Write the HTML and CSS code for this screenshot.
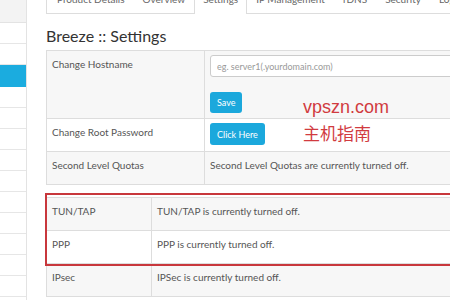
FILE: index.html
```html
<!doctype html>
<html lang="en">

<head>
    <meta charset="utf-8">
    <title>Breeze :: Settings</title>
    <link rel="stylesheet" href="styles.css">
</head>

<body>
<div class="page">
    <div class="sidebar">
        <div class="side-top"></div>
        <ul class="side-menu">
            <li></li>
            <li></li>
            <li class="active"></li>
            <li></li>
            <li></li>
            <li></li>
            <li></li>
            <li></li>
            <li></li>
            <li></li>
            <li></li>
            <li></li>
            <li></li>
        </ul>
    </div>

    <div class="main">
        <ul class="tabs">
            <li class="first">Product Details</li>
            <li>Overview</li>
            <li class="active">Settings</li>
            <li>IP Management</li>
            <li>rDNS</li>
            <li>Security</li>
            <li>Log</li>
        </ul>

        <h2 class="title">Breeze :: Settings</h2>

        <table class="settings">
            <colgroup>
                <col class="label-col">
                <col>
            </colgroup>
            <tr>
                <td class="label">Change Hostname</td>
                <td class="field">
                    <input class="input" type="text" placeholder="eg. server1(.yourdomain.com)">
                    <button class="btn save">Save</button>
                </td>
            </tr>
            <tr>
                <td class="label">Change Root Password</td>
                <td class="field">
                    <button class="btn">Click Here</button>
                </td>
            </tr>
            <tr>
                <td class="label">Second Level Quotas</td>
                <td>Second Level Quotas are currently turned off.</td>
            </tr>
        </table>

        <div class="group">
            <table class="settings modules">
                <colgroup>
                    <col class="short-col">
                    <col>
                </colgroup>
                <tr>
                    <td>TUN/TAP</td>
                    <td>TUN/TAP is currently turned off.</td>
                </tr>
                <tr>
                    <td>PPP</td>
                    <td>PPP is currently turned off.</td>
                </tr>
                <tr>
                    <td>IPsec</td>
                    <td>IPSec is currently turned off.</td>
                </tr>
            </table>
            <div class="mark"></div>
        </div>
    </div>

    <div class="watermark">
        <div class="wm-en">vpszn.com</div>
        <div class="wm-cn">主机指南</div>
    </div>
</div>
</body>

</html>
```

FILE: styles.css
```css
body {
    margin: 0;
    font-family: Lato, "Open Sans", sans-serif;
    font-size: 10px;
    color: #555555;
    background: #ffffff;
    overflow: hidden;
}

.page {
    position: relative;
    display: flex;
    height: 300px;
    overflow: hidden;
}

/* left menu */
.sidebar {
    width: 26px;
    flex-shrink: 0;
    margin-right: 19px;
    border-right: 1px solid #e3e3e3;
}

.side-top {
    height: 22px;
    background: #f3f3f3;
    border-bottom: 1px solid #e3e3e3;
}

.side-menu {
    list-style: none;
    margin: 0;
    padding: 0;
}

.side-menu li {
    height: 20px;
    border-bottom: 1px solid #e6e6e6;
}

.side-menu li.active {
    height: 21px;
    background: #1bacdf;
    border-bottom-color: #1bacdf;
}

/* content */
.main {
    width: 470px;
    flex-shrink: 0;
    margin-top: -9px;
}

.tabs {
    display: flex;
    list-style: none;
    margin: 0;
    padding: 0;
    border-bottom: 1px solid #dddddd;
    white-space: nowrap;
}

.tabs li {
    padding: 0 8px 6px;
    font-size: 10px;
    line-height: 15px;
    color: #666666;
    border: 1px solid transparent;
    border-bottom: none;
}

.tabs li.first {
    border-left-color: #dddddd;
    padding-left: 10px;
}

.tabs li.active {
    background: #ffffff;
    border-color: #dddddd;
    margin-bottom: -1px;
    padding-bottom: 7px;
}

.title {
    margin: 12px 0 4px;
    font-size: 16px;
    line-height: 20px;
    font-weight: normal;
    color: #333333;
}

.settings {
    width: 100%;
    table-layout: fixed;
    border-collapse: collapse;
    border: 1px solid #dddddd;
}

.label-col {
    width: 158px;
}

.short-col {
    width: 105px;
}

.settings td {
    border: 1px solid #dddddd;
    padding: 6px 6px 12px 5px;
    line-height: 14px;
    vertical-align: top;
    white-space: nowrap;
}

.settings tr:nth-child(odd) td {
    background: #f7f7f7;
}

.settings td.field {
    padding: 4px 6px 5px 5px;
}

.input {
    display: block;
    box-sizing: border-box;
    width: 100%;
    height: 22px;
    padding: 0 6px;
    border: 1px solid #cccccc;
    border-radius: 3px;
    background: #ffffff;
    font-family: Lato, "Open Sans", sans-serif;
    font-size: 9px;
}

.input::placeholder {
    color: #999999;
}

.btn {
    display: block;
    height: 22px;
    padding: 0 7px;
    border: none;
    border-radius: 3px;
    background: #1ba8dc;
    color: #ffffff;
    font-family: Lato, "Open Sans", sans-serif;
    font-size: 9px;
}

.btn.save {
    margin-top: 15px;
    height: 21px;
}

.group {
    position: relative;
    margin-top: 12px;
}

.mark {
    position: absolute;
    left: -1px;
    top: -4px;
    width: 500px;
    height: 69px;
    border: 2px solid #c8373c;
}

.watermark {
    position: absolute;
    left: 303px;
    top: 97px;
    color: #d13b3f;
    font-family: "Liberation Sans", "Noto Sans CJK SC", sans-serif;
}

.wm-en {
    font-size: 18px;
    line-height: 20px;
}

.wm-cn {
    margin-top: 8px;
    font-size: 17px;
    line-height: 20px;
}
```
